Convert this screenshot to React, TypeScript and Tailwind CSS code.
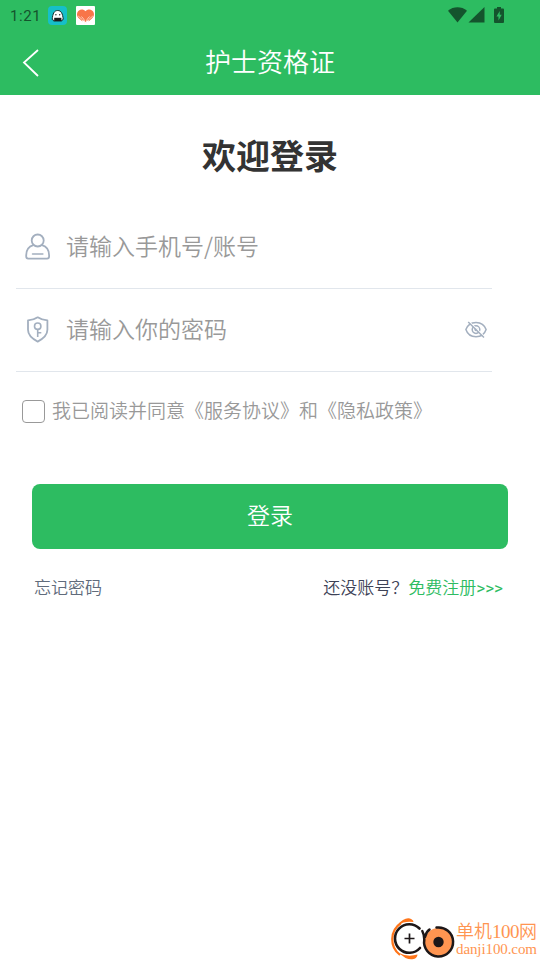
import { type ReactNode, useState } from "react";

function GhostAppIcon() {
  return (
    <svg width="19" height="19" viewBox="0 0 19 19" aria-hidden="true">
      <rect width="19" height="19" rx="4" fill="#16bfc9" />
      <path
        d="M4.200 13.500C4.600 7.500 6.300 4.500 9.700 4.500s5.100 3 5.500 9l-1.400.7v.8H5.600v-.8z"
        fill="#fff"
        stroke="#15302f"
        strokeWidth="1"
      />
      <path d="M6.200 11.800h7.200v3.200H6.200z" fill="#1b1b1b" />
      <circle cx="7.900" cy="8.800" r="0.700" fill="#1b1b1b" />
      <circle cx="11.700" cy="8.800" r="0.700" fill="#1b1b1b" />
    </svg>
  );
}

function HeartAppIcon() {
  return (
    <svg width="19" height="19" viewBox="0 0 19 19" aria-hidden="true">
      <rect width="19" height="19" rx="1" fill="#fff" />
      <path
        d="M9.500 5.300C8 3.400 5 3 3 4.400.2 6.500.4 10.300 3.300 12.700L6.500 15.500l-.4-2 3.400 2.500 3.400-2.500-.4 2 3.200-2.800c2.900-2.400 3.100-6.200.3-8.300-2-1.400-5-1-6.500.9z"
        fill="#f87549"
      />
      <path
        d="M2.200 10l4 3.500M5.500 10.500l2 2.400c1 1.200 1.200 2.600 1.200 4.600M16.800 10l-4 3.500M13.500 10.500l-2 2.400c-1 1.200-1.200 2.600-1.200 4.600"
        fill="none"
        stroke="#fff1e9"
        strokeWidth="0.700"
      />
    </svg>
  );
}

function SystemIcons() {
  return (
    <svg width="58" height="18" viewBox="0 0 58 18" fill="#14542d" aria-hidden="true">
      <path d="M0 3.700C5.500-.9 13.500-.9 19 3.700L9.500 15.500z" />
      <path d="M36.500 0v15.500H20.500z" />
      <path d="M49 0h4v1.500h2q1 0 1 1V15q0 1-1 1h-8q-1 0-1-1V2.500q0-1 1-1h2z" />
      <path d="M51.700 4L48.500 9.500h2v4l3.200-5.700h-2z" fill="#2dbc61" />
    </svg>
  );
}

function UserIcon() {
  return (
    <svg width="26" height="28" viewBox="0 0 26 28" fill="none" stroke="#a3afbf" strokeWidth="1.8" aria-hidden="true">
      <circle cx="12.700" cy="7.500" r="6" />
      <path d="M8.300 12.200C4 13.500 1.200 17.500 1.200 22.300v1.300q0 2 2 2h18.900q2 0 2-2v-1.300c0-4.800-2.800-8.800-7.100-10.100" />
      <path d="M7.500 21h10.400" strokeLinecap="round" strokeWidth="1.500" />
    </svg>
  );
}

function ShieldKeyIcon() {
  return (
    <svg width="26" height="28" viewBox="0 0 26 28" fill="none" stroke="#a3afbf" strokeWidth="1.8" aria-hidden="true">
      <path
        d="M12.700 1.300C9.800 3.300 6.500 4.100 3 4.400v9.400c0 5.400 3.900 8.800 9.700 11.800 5.800-3 9.700-6.400 9.700-11.800V4.400c-3.500-.3-6.800-1.100-9.700-3.100z"
        strokeLinejoin="round"
      />
      <circle cx="12.700" cy="10.200" r="3.200" strokeWidth="1.600" />
      <path d="M12.700 13.400v7.600M12.700 16.800h3.600" strokeWidth="1.600" />
    </svg>
  );
}

function EyeOffIcon() {
  return (
    <svg width="22" height="18" viewBox="0 0 22 18" fill="none" stroke="#a3afbf" strokeWidth="1.500" aria-hidden="true">
      <path d="M.9 8.600C2.500 3.800 6.500 1.400 11 1.400s8.500 2.400 10.100 7.200c-1.600 4.800-5.600 7.200-10.100 7.200S2.500 13.400.9 8.600z" />
      <circle cx="11" cy="8.600" r="3.800" />
      <circle cx="11" cy="8.600" r="0.900" />
      <path d="M4.500 1l15 14.800" stroke="#fff" strokeWidth="1.200" />
      <path d="M3.200 1l15.800 15.500" strokeWidth="1.500" />
    </svg>
  );
}

function SiteLogo() {
  return (
    <svg width="66" height="44" viewBox="0 0 66 44" fill="none" aria-hidden="true">
      <path d="M11 7C-.5 15-.5 31 10 39" stroke="#ff751a" strokeWidth="2.200" />
      <path d="M8 9C12 3 18 1 21.500 3.300q2 1.200 2 2.700Q15 4.500 8 9z" fill="#ff751a" />
      <path d="M8 36.500Q17 41.500 27.500 38.500C27 43.500 21 44.500 15.500 42z" fill="#ff751a" />
      <path d="M29.500 12.500A14.300 14.300 0 1 0 30 32" stroke="#1d1718" strokeWidth="2.600" strokeLinecap="round" />
      <path d="M19.500 17.500v10M14.500 22.500h10" stroke="#1d1718" strokeWidth="1.700" />
      <circle cx="48.500" cy="26" r="14" fill="#ff9551" />
      <path
        d="M46.500 11.600A14.500 14.500 0 1 1 34.300 23.500Q34 18 32.300 15M35 21q1-5 4.500-7.500"
        stroke="#1d1718"
        strokeWidth="2.500"
        strokeLinecap="round"
      />
      <circle cx="48.500" cy="26" r="5.200" fill="#1d1718" />
    </svg>
  );
}

function Field({
  icon,
  type,
  placeholder,
  children,
}: {
  icon: ReactNode;
  type: string;
  placeholder: string;
  children?: ReactNode;
}) {
  return (
    <label className="flex h-[83px] items-center border-b border-[#e1e6ec] pr-[5px] pl-[9px]">
      {icon}
      <input
        type={type}
        placeholder={placeholder}
        className="ml-[15px] h-12 min-w-0 flex-1 bg-transparent pb-[5px] text-[23px] text-[#333] outline-none placeholder:text-[#999]"
      />
      {children}
    </label>
  );
}

export default function App() {
  const [agreed, setAgreed] = useState(false);
  const [visible, setVisible] = useState(false);

  return (
    <div className="flex h-[960px] w-[540px] flex-col overflow-hidden bg-white font-['Noto_Sans_CJK_SC',sans-serif] font-[350]">
      <header className="h-[95px] shrink-0 bg-[#2dbc61] text-white">
        <div className="flex h-[31px] items-center justify-between pr-[34px] pl-[10px]">
          <div className="flex items-center">
            <span className="w-[38px] pt-px font-[Roboto,sans-serif] text-[15px] leading-none font-normal tracking-[0.6px] text-[#14542d]">
              1:21
            </span>
            <GhostAppIcon />
            <span className="ml-[9px]">
              <HeartAppIcon />
            </span>
          </div>
          <SystemIcons />
        </div>
        <div className="grid h-16 grid-cols-[60px_1fr_60px] items-center">
          <button type="button" aria-label="返回" className="pl-[22px]">
            <svg width="18" height="28" viewBox="0 0 18 28" fill="none" aria-hidden="true">
              <path d="M16 1L2 13.500L16 27" stroke="#fff" strokeWidth="1.800" />
            </svg>
          </button>
          <h1 className="pb-[4px] text-center text-[26px] leading-none">护士资格证</h1>
        </div>
      </header>

      <main className="flex flex-1 flex-col">
        <h2 className="flex h-[111px] items-center justify-center pt-[8px] text-[34px] leading-none font-bold text-[#333]">
          欢迎登录
        </h2>

        <div className="mr-12 ml-4">
          <Field icon={<UserIcon />} type="text" placeholder="请输入手机号/账号" />
          <Field icon={<ShieldKeyIcon />} type={visible ? "text" : "password"} placeholder="请输入你的密码">
            <button type="button" aria-label="显示密码" onClick={() => setVisible(!visible)}>
              <EyeOffIcon />
            </button>
          </Field>
        </div>

        <label className="mt-[27px] ml-[22px] flex h-6 items-center gap-[7px] text-[19px] text-[#999]">
          <input
            type="checkbox"
            checked={agreed}
            onChange={(e) => setAgreed(e.target.checked)}
            className="size-[23px] appearance-none rounded-[4px] border border-[#999] checked:bg-[#2dbc61]"
          />
          <span className="pb-[3px] leading-none">我已阅读并同意《服务协议》和《隐私政策》</span>
        </label>

        <button
          type="button"
          className="mx-8 mt-[61px] h-[65px] rounded-lg bg-[#2dbc61] pb-[5px] text-[23px] text-white"
        >
          登录
        </button>

        <div className="mt-[26px] flex justify-between pr-[37px] pl-[34px] text-[17px] leading-6">
          <a className="text-[#606b7b]">忘记密码</a>
          <p className="text-[#3d4256]">
            还没账号？
            <a className="text-[#2dbc61]">
              免费注册<span className="font-[Roboto,sans-serif] font-normal">&gt;&gt;&gt;</span>
            </a>
          </p>
        </div>
      </main>

      <footer className="flex h-[44px] shrink-0 items-start justify-end pr-[2px]">
        <SiteLogo />
        <div className="w-[82px] pt-[3px] font-['Liberation_Serif','Noto_Sans_CJK_SC',serif] whitespace-nowrap text-[#ff9551]">
          <p className="text-[18px] leading-[26px]">
            单机<span className="text-[19px] tracking-[-0.5px]">100</span>网
          </p>
          <p className="text-[15px] leading-[8px] tracking-[-0.1px]">danji100.com</p>
        </div>
      </footer>
    </div>
  );
}
